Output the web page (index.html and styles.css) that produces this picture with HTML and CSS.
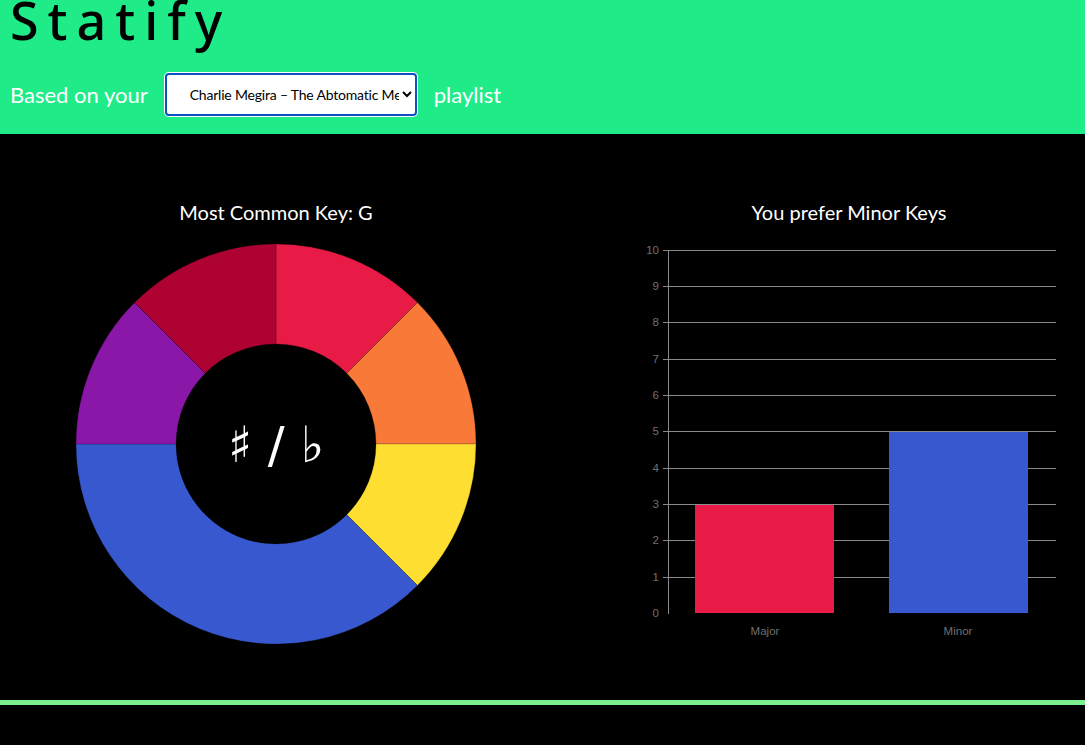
FILE: index.html
```html
<!DOCTYPE html>
<html lang="en">
<head>
<meta charset="utf-8">
<title>Statify</title>
<link rel="stylesheet" href="styles.css">
</head>
<body>
<header class="top">
  <h1 class="brand">Statify</h1>
  <div class="picker">
    <span class="picker-label">Based on your</span>
    <select class="playlist-select">
      <option>Charlie Megira – The Abtomatic Meisterzinger Mambo Chic</option>
    </select>
    <span class="picker-label">playlist</span>
  </div>
</header>

<main class="charts">
  <section class="chart chart-key">
    <h2 class="chart-title">Most Common Key: G</h2>
    <svg class="donut" width="400" height="400" viewBox="0 0 400 400">
      <g stroke="rgba(0,0,0,0.25)" stroke-width="0.8">
        <path fill="#e81b46" d="M200 0 A200 200 0 0 1 341.42 58.58 L270.71 129.29 A100 100 0 0 0 200 100 Z"/>
        <path fill="#f97a38" d="M341.42 58.58 A200 200 0 0 1 400 200 L300 200 A100 100 0 0 0 270.71 129.29 Z"/>
        <path fill="#ffde32" d="M400 200 A200 200 0 0 1 341.42 341.42 L270.71 270.71 A100 100 0 0 0 300 200 Z"/>
        <path fill="#3858cf" d="M341.42 341.42 A200 200 0 0 1 0 200 L100 200 A100 100 0 0 0 270.71 270.71 Z"/>
        <path fill="#8b17a8" d="M0 200 A200 200 0 0 1 58.58 58.58 L129.29 129.29 A100 100 0 0 0 100 200 Z"/>
        <path fill="#ad0232" d="M58.58 58.58 A200 200 0 0 1 200 0 L200 100 A100 100 0 0 0 129.29 129.29 Z"/>
      </g>
      <text class="donut-label" x="200" y="218" text-anchor="middle">♯︎ / ♭︎</text>
    </svg>
  </section>

  <section class="chart chart-mode">
    <h2 class="chart-title">You prefer Minor Keys</h2>
    <svg class="bars" width="472" height="400" viewBox="0 0 472 400">
      <g class="grid" stroke="#8a8a8a" stroke-width="1">
        <line x1="50" x2="443" y1="6.5" y2="6.5"/>
        <line x1="50" x2="443" y1="42.5" y2="42.5"/>
        <line x1="50" x2="443" y1="78.5" y2="78.5"/>
        <line x1="50" x2="443" y1="115.5" y2="115.5"/>
        <line x1="50" x2="443" y1="151.5" y2="151.5"/>
        <line x1="50" x2="443" y1="187.5" y2="187.5"/>
        <line x1="50" x2="443" y1="224.5" y2="224.5"/>
        <line x1="50" x2="443" y1="260.5" y2="260.5"/>
        <line x1="50" x2="443" y1="296.5" y2="296.5"/>
        <line x1="50" x2="443" y1="333.5" y2="333.5"/>
        <line x1="55.5" x2="55.5" y1="6" y2="370"/>
      </g>
      <g class="ticks" text-anchor="end">
        <text x="46" y="10">10</text>
        <text x="46" y="46">9</text>
        <text x="46" y="82">8</text>
        <text x="46" y="119">7</text>
        <text x="46" y="155">6</text>
        <text x="46" y="191">5</text>
        <text x="46" y="228">4</text>
        <text x="46" y="264">3</text>
        <text x="46" y="300">2</text>
        <text x="46" y="337">1</text>
        <text x="46" y="373">0</text>
      </g>
      <rect x="82" y="261" width="139" height="108" fill="#e81b46"/>
      <rect x="276" y="188" width="139" height="181" fill="#3858cf"/>
      <g class="ticks" text-anchor="middle">
        <text x="152" y="391">Major</text>
        <text x="345" y="391">Minor</text>
      </g>
    </svg>
  </section>
</main>

<div class="divider"></div>
<footer class="bottom"></footer>
</body>
</html>
```

FILE: styles.css
```css
html, body {
  margin: 0;
  padding: 0;
  background: #000;
}

body {
  font-family: "Source Sans Pro", Lato, "Noto Sans", sans-serif;
  color: #fff;
}

.top {
  display: flex;
  flex-direction: column;
  background: #1fec89;
  padding: 0 10px 18px 10px;
}

.brand {
  margin: -10px 0 0 0;
  font-family: "Noto Sans", sans-serif;
  font-weight: 500;
  font-size: 52px;
  line-height: 60px;
  letter-spacing: 9px;
  color: #000;
}

.picker {
  display: flex;
  align-items: center;
  gap: 17px;
  margin-top: 23px;
}

.picker-label {
  font-size: 22px;
  color: #fff;
}

.playlist-select {
  width: 252px;
  height: 43px;
  box-sizing: border-box;
  border: 2px solid #0b51c4;
  border-radius: 4px;
  box-shadow: 0 0 0 1px #ffffff;
  background: #fff;
  color: #000;
  font-family: "Source Sans Pro", Lato, "Noto Sans", sans-serif;
  font-size: 14px;
  letter-spacing: -0.2px;
  padding: 0 0 0 19px;
  outline: none;
}

.charts {
  display: grid;
  grid-template-columns: 552px 472px;
  column-gap: 61px;
  padding: 66px 0 53px 0;
  height: 447px;
}

.chart {
  display: flex;
  flex-direction: column;
  align-items: center;
}

.chart-title {
  margin: 0 0 20px 0;
  font-size: 20px;
  line-height: 24px;
  font-weight: normal;
  color: #fff;
}

.donut {
  display: block;
}

.donut-label {
  fill: #fff;
  font-family: "DejaVu Sans", sans-serif;
  font-size: 50px;
}

.bars {
  display: block;
}

.ticks text {
  fill: #707070;
  font-family: "Liberation Sans", Arial, sans-serif;
  font-size: 11.5px;
}

.divider {
  height: 5px;
  background: #7cf08a;
}

.bottom {
  height: 41px;
  background: #000;
}
```
